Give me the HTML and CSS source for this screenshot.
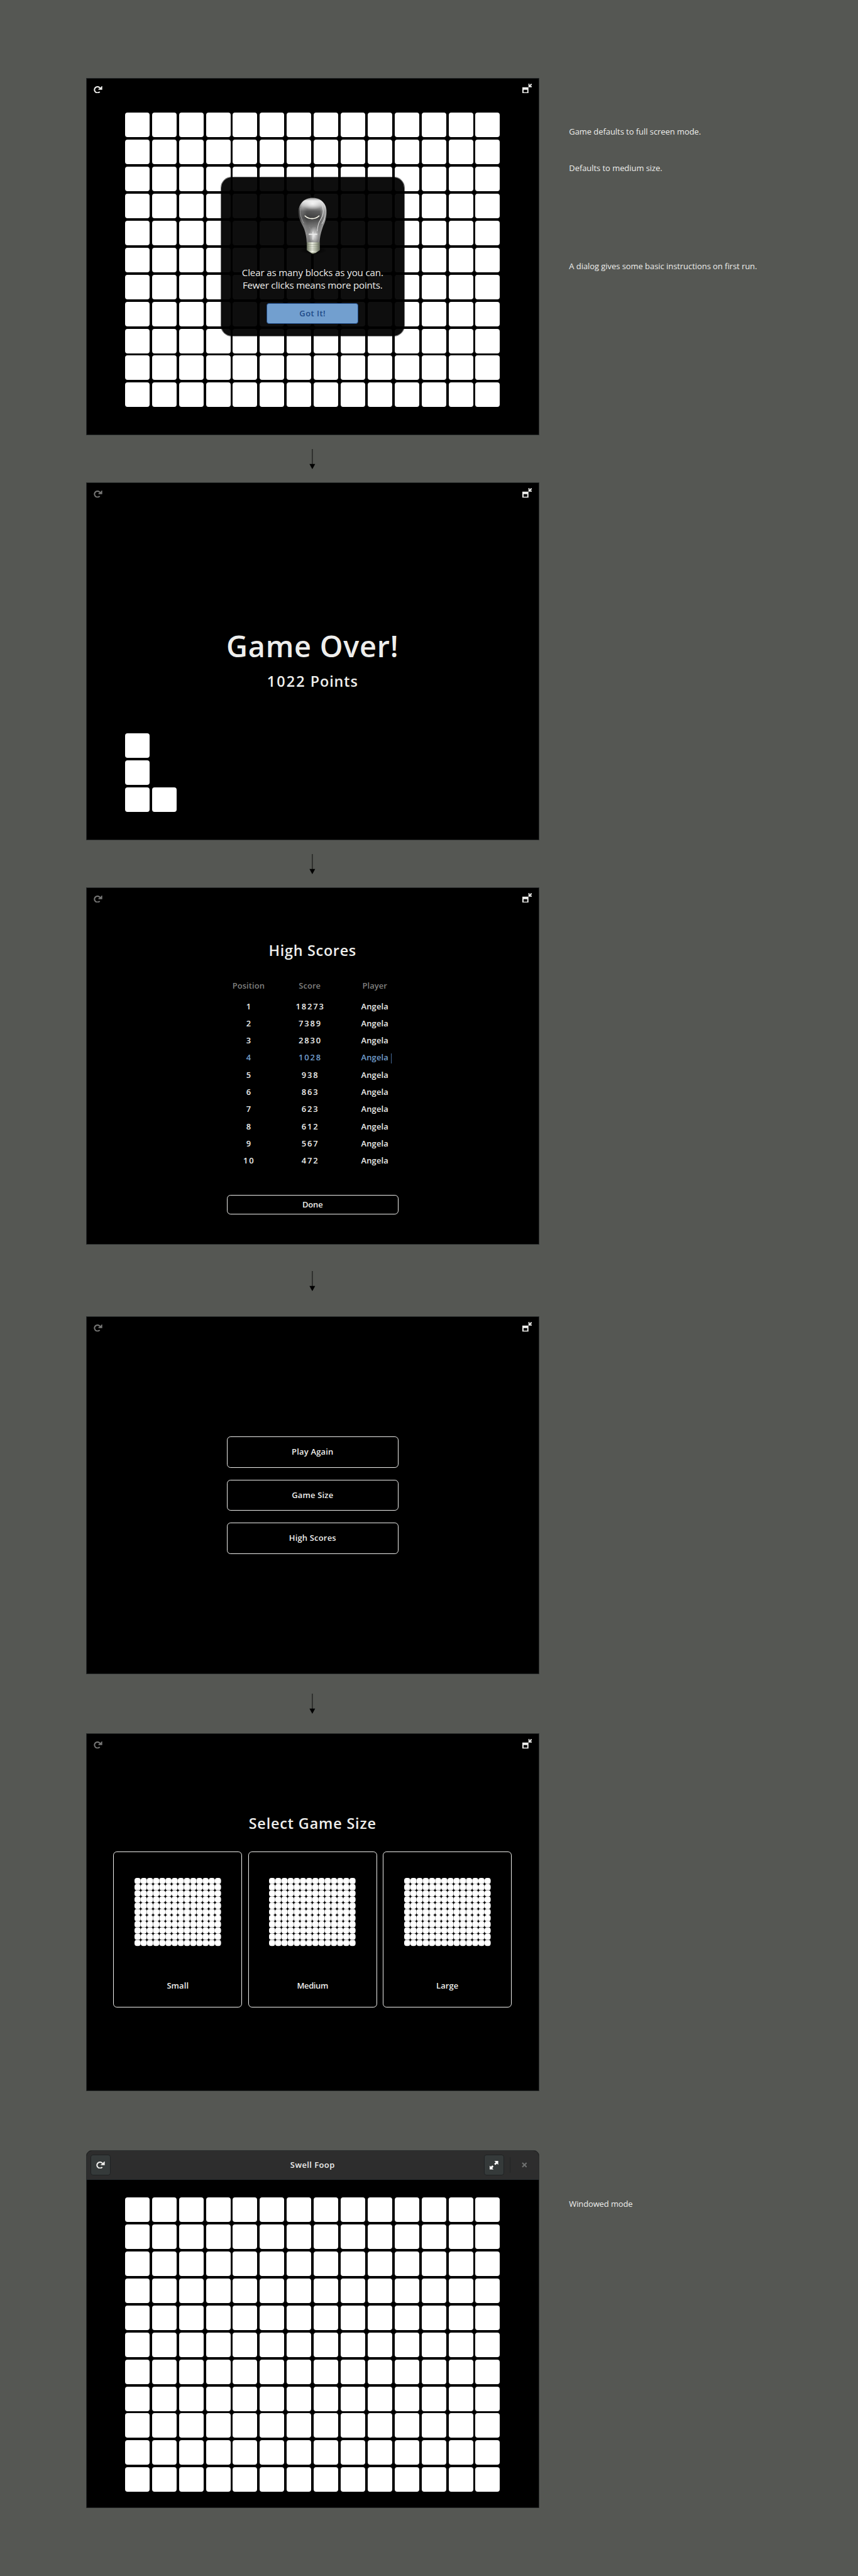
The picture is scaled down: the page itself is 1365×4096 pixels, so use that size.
FILE: index.html
```
<!DOCTYPE html>
<html lang="en">
<head>
<meta charset="utf-8">
<title>Swell Foop</title>
<link rel="stylesheet" href="styles.css">
</head>
<body>
<svg class="defs" width="0" height="0">
  <symbol id="reset" viewBox="0 0 16 16">
    <path d="M9.9 13.2A4.9 4.9 0 1 1 10.500 7.600" fill="none" stroke="currentColor" stroke-width="2.1"/>
    <path d="M14 4v6H7.800V8.400L9.500 8.200 12.800 4.400 13.200 4z" fill="currentColor"/>
  </symbol>
  <symbol id="restore" viewBox="0 0 16 16">
    <path d="M0 6h10v10H0zM2 10v4h6v-4z" fill="currentColor" fill-rule="evenodd"/>
    <path d="M10 0h1.6v2.6L14.4 0 16 1.4 13.2 4.2H15.5V6H10z" fill="currentColor"/>
  </symbol>
  <symbol id="expand" viewBox="0 0 16 16">
    <path d="M8.6 1H15v6.4l-2-2-2.6 2.4-2-2L11 3.2zM1 15V8.600l2 2 2.400-2.400 2 2L5.200 12.800 7.400 15z" fill="currentColor"/>
  </symbol>
  <symbol id="arrow" viewBox="0 0 10 33">
    <path d="M5 0v25" stroke="#2b2c2a" stroke-width="1.8"/>
    <path d="M.3 24.300h9.400L5 32.700z" fill="#000"/>
  </symbol>
</svg>

<main class="page">
  <section class="step">
    <div class="screen">
      <div class="tools"><svg class="icon"><use href="#reset"/></svg><svg class="icon"><use href="#restore"/></svg></div>
      <div class="board" data-cells="154"></div>
      <div class="dialog">
        <svg class="bulb" viewBox="0 0 48 92">
          <defs>
            <linearGradient id="glass" x1="0" y1="0" x2="0" y2="1">
              <stop offset="0" stop-color="#777"/><stop offset=".07" stop-color="#e0e0e0"/><stop offset=".17" stop-color="#b4b4b4"/>
              <stop offset=".3" stop-color="#555"/><stop offset=".45" stop-color="#3c3c3c"/><stop offset=".62" stop-color="#707070"/>
              <stop offset=".8" stop-color="#8d8d8d"/><stop offset="1" stop-color="#777"/>
            </linearGradient>
            <linearGradient id="edge" x1="0" y1="0" x2="1" y2="0">
              <stop offset="0" stop-color="#000" stop-opacity=".45"/><stop offset=".16" stop-color="#fff" stop-opacity=".12"/>
              <stop offset=".3" stop-color="#fff" stop-opacity="0"/><stop offset=".75" stop-color="#fff" stop-opacity=".05"/>
              <stop offset=".93" stop-color="#fff" stop-opacity=".45"/><stop offset="1" stop-color="#000" stop-opacity=".3"/>
            </linearGradient>
            <linearGradient id="brass" x1="0" y1="0" x2="1" y2="0">
              <stop offset="0" stop-color="#5e6656"/><stop offset=".15" stop-color="#a5ab96"/><stop offset=".42" stop-color="#f0f2e6"/>
              <stop offset=".7" stop-color="#b3b8a5"/><stop offset="1" stop-color="#5c6154"/>
            </linearGradient>
            <radialGradient id="glow"><stop offset="0" stop-color="#fff" stop-opacity=".8"/><stop offset="1" stop-color="#fff" stop-opacity="0"/></radialGradient>
            <radialGradient id="shade"><stop offset="0" stop-color="#000"/><stop offset="1" stop-color="#000" stop-opacity="0"/></radialGradient>
          </defs>
          <ellipse cx="25" cy="86" rx="23" ry="7" fill="url(#shade)"/>
          <path d="M24 .5C10.500.500.800 10.500.800 24.500c0 11 6 18 9.500 27 2.500 7 3.700 14 4 22.500h21c.300-8 1.700-15 3.700-21C41.500 43.500 47.200 36 47.200 24.500 47.200 10.500 37.500.500 24 .5z" fill="url(#glass)"/>
          <path d="M24 .5C10.500.500.800 10.500.800 24.500c0 11 6 18 9.500 27 2.500 7 3.700 14 4 22.500h21c.300-8 1.700-15 3.700-21C41.500 43.500 47.200 36 47.200 24.500 47.200 10.500 37.500.500 24 .5z" fill="url(#edge)"/>
          <ellipse cx="24" cy="10" rx="18" ry="10" fill="url(#glow)"/>
          <ellipse cx="26" cy="62" rx="8" ry="15" fill="url(#glow)"/>
          <path d="M4.500 17c-1.500 9 0 16 5 25" fill="none" stroke="#aaa" stroke-width=".8"/>
          <path d="M38 9c4.500 9 4 19-1 27-4 6-5 12-5.500 19" fill="none" stroke="#d8d8d8" stroke-width="1.100"/>
          <path d="M44 14c3 10 1 20-5 29" fill="none" stroke="#ddd" stroke-width="1"/>
          <path d="M11.500 30c6 6 17 6 23 0" fill="none" stroke="#fffef0" stroke-width="1.600" stroke-linecap="round"/>
          <path d="M19 48l4 12M29 48l-3 12" stroke="#999" stroke-width=".5"/>
          <path d="M17.500 60h14" stroke="#eee" stroke-width="1.800"/>
          <path d="M24.500 56v13" stroke="#eee" stroke-width="1"/>
          <path d="M14.300 73h21.500v13l-7 4.500h-7L14.300 86z" fill="url(#brass)"/>
          <path d="M14.500 76.500h21M14.500 79.500h21M14.500 82.500h21M15 85.500h20" stroke="#6b7162" stroke-opacity=".6" stroke-width=".8"/>
          <path d="M20 90h9l-4.500 2z" fill="#8c957a"/>
        </svg>
        <p class="hint"><span class="hint-a">Clear as many blocks as you can.</span><br><span class="hint-b">Fewer clicks means more points.</span></p>
        <div class="got">Got It!</div>
      </div>
    </div>
    <div class="notes">
      <p>Game defaults to full screen mode.</p>
      <p class="note-size">Defaults to medium size.</p>
      <p class="note-dialog">A dialog gives some basic instructions on first run.</p>
    </div>
  </section>

  <div class="next"><svg class="arrow"><use href="#arrow"/></svg></div>

  <section class="step">
    <div class="screen">
      <div class="tools"><svg class="icon dim"><use href="#reset"/></svg><svg class="icon"><use href="#restore"/></svg></div>
      <h1 class="over">Game Over!</h1>
      <p class="points"><span class="num">1022</span> Points</p>
      <div class="left-over"><i class="cell"></i><i class="cell row2"></i><i class="cell row3"></i><i class="cell row3 col2"></i></div>
    </div>
  </section>

  <div class="next"><svg class="arrow"><use href="#arrow"/></svg></div>

  <section class="step">
    <div class="screen">
      <div class="tools"><svg class="icon dim"><use href="#reset"/></svg><svg class="icon"><use href="#restore"/></svg></div>
      <h2 class="title scores-title">High Scores</h2>
      <div class="scores">
        <div class="row head"><span>Position</span><span>Score</span><span>Player</span></div>
        <div class="row"><b>1</b><b>18273</b><span>Angela</span></div>
        <div class="row"><b>2</b><b>7389</b><span>Angela</span></div>
        <div class="row"><b>3</b><b>2830</b><span>Angela</span></div>
        <div class="row mine"><b>4</b><b>1028</b><span class="entry">Angela</span></div>
        <div class="row"><b>5</b><b>938</b><span>Angela</span></div>
        <div class="row"><b>6</b><b>863</b><span>Angela</span></div>
        <div class="row"><b>7</b><b>623</b><span>Angela</span></div>
        <div class="row"><b>8</b><b>612</b><span>Angela</span></div>
        <div class="row"><b>9</b><b>567</b><span>Angela</span></div>
        <div class="row"><b>10</b><b>472</b><span>Angela</span></div>
      </div>
      <div class="button done">Done</div>
    </div>
  </section>

  <div class="next tall"><svg class="arrow"><use href="#arrow"/></svg></div>

  <section class="step">
    <div class="screen">
      <div class="tools"><svg class="icon dim"><use href="#reset"/></svg><svg class="icon"><use href="#restore"/></svg></div>
      <div class="menu">
        <div class="button">Play Again</div>
        <div class="button">Game Size</div>
        <div class="button">High Scores</div>
      </div>
    </div>
  </section>

  <div class="next mid"><svg class="arrow"><use href="#arrow"/></svg></div>

  <section class="step">
    <div class="screen">
      <div class="tools"><svg class="icon dim"><use href="#reset"/></svg><svg class="icon"><use href="#restore"/></svg></div>
      <h2 class="title size-title">Select Game Size</h2>
      <div class="sizes">
        <div class="size"><svg class="mini"></svg><span>Small</span></div>
        <div class="size"><svg class="mini"></svg><span class="medium">Medium</span></div>
        <div class="size"><svg class="mini"></svg><span>Large</span></div>
      </div>
    </div>
  </section>

  <div class="next mid"></div>

  <section class="step">
    <div class="screen window">
      <div class="header">
        <div class="tool"><svg class="icon"><use href="#reset"/></svg></div>
        <div class="name">Swell Foop</div>
        <div class="controls">
          <div class="tool"><svg class="icon expand"><use href="#expand"/></svg></div>
          <i class="divider"></i>
          <svg class="close" viewBox="0 0 9 9"><path d="M1 1l7 7M8 1L1 8" stroke="#6f7170" stroke-width="2.200"/></svg>
        </div>
      </div>
      <div class="board" data-cells="154"></div>
    </div>
    <div class="notes"><p class="note-window">Windowed mode</p></div>
  </section>
</main>
<script src="board.js"></script>
</body>
</html>
```
FILE: styles.css
```
* { box-sizing: border-box; margin: 0; }
html { background: #555753; overflow: hidden; }
body {
  zoom: 0.975;
  width: 1400px;
  background: #555753;
  color: #eeeeec;
  font: 13.3px/20px "Open Sans", "Noto Sans", sans-serif;
}
.defs { position: absolute; }
.page { height: 4200px; padding: 127px 0 0 140px; display: flex; flex-direction: column; }
.step { display: flex; flex: none; }
.next { flex: none; width: 740px; height: 77px; padding-top: 22.5px; }
.next.tall { height: 117px; padding-top: 42.5px; }
.next.mid { height: 97px; padding-top: 32.5px; }
.arrow { display: block; width: 10px; height: 33px; margin: 0 auto; }

.screen {
  position: relative;
  flex: none;
  width: 740px;
  height: 583px;
  background: #000;
  border: 1px solid #2a2d2d;
  display: flex;
  flex-direction: column;
  align-items: center;
}
.tools { align-self: stretch; flex: none; height: 56px; padding: 8px 11px 0 12px; display: flex; justify-content: space-between; }
.icon { display: block; width: 16px; height: 16px; color: #eeeeec; }
.icon.dim { color: #777776; }

.board { flex: none; width: 612px; display: grid; grid-template-columns: repeat(14, 40px); grid-auto-rows: 40px; gap: 4px; }
.cell { display: block; width: 40px; height: 40px; border-radius: 4px; background: #fff; }

.notes { margin-left: 48.5px; padding-top: 78px; letter-spacing: -0.04px; white-space: nowrap; }
.note-size { margin-top: 40px; }
.note-dialog { margin-top: 140px; }
.note-window { letter-spacing: -0.1px; }

.dialog {
  position: absolute;
  left: 218.5px;
  top: 160px;
  width: 301px;
  height: 260.5px;
  padding-top: 33px;
  border: 1px solid rgba(0, 0, 0, 0.55);
  border-radius: 18px;
  background: rgba(0, 0, 0, 0.945);
  background-clip: padding-box;
  display: flex;
  flex-direction: column;
  align-items: center;
}
.bulb { flex: none; width: 48px; height: 92px; }
.hint { margin-top: 21px; font-size: 15.5px; line-height: 20px; text-align: center; white-space: nowrap; }
.hint-a { letter-spacing: -0.15px; }
.hint-b { letter-spacing: -0.2px; }
.got {
  width: 150px;
  height: 34px;
  margin-top: 19px;
  border: 1px solid #204a87;
  border-radius: 4px;
  background: #729fcf;
  color: #204a87;
  font-weight: 600;
  line-height: 32px;
  letter-spacing: 0.5px;
  text-align: center;
}

.over { margin-top: 179.7px; font-size: 48px; line-height: 60px; font-weight: 600; letter-spacing: 0.77px; }
.points { margin-top: 11.3px; font-size: 24px; line-height: 32px; font-weight: 600; letter-spacing: 0.9px; }
.num { letter-spacing: 2.2px; }
.left-over { align-self: flex-start; margin: 69px 0 0 63px; display: grid; grid-template-columns: 40px 40px; grid-auto-rows: 40px; gap: 4px; }
.row2 { grid-row: 2; }
.row3 { grid-row: 3; }
.col2 { grid-column: 2; }

.title { font-size: 24px; line-height: 32px; font-weight: 600; }
.scores-title { margin-top: 30.7px; letter-spacing: 0.71px; }
.scores { align-self: flex-start; margin: 26.8px 0 0 214.6px; font-weight: 600; }
.row { height: 28px; line-height: 28px; display: grid; grid-template-columns: 99.8px 99.8px 112.6px; text-align: center; letter-spacing: 0.18px; }
.row b { font-weight: 600; letter-spacing: 1.9px; text-indent: 1.9px; }
.head { height: 33.8px; color: #7f7f7e; letter-spacing: 0.1px; }
.mine { color: #729fcf; }
.entry { position: relative; }
.entry::after { content: ""; position: absolute; left: 82.5px; top: 6.5px; width: 1.5px; height: 17px; background: #456795; }

.button {
  width: 280px;
  height: 51px;
  border: 1px solid #eeeeec;
  border-radius: 6px;
  font-weight: 600;
  line-height: 49px;
  letter-spacing: 0.2px;
  text-align: center;
}
.done { height: 32px; line-height: 30px; margin-top: 41.7px; letter-spacing: -0.1px; }
.menu { margin-top: 139px; display: flex; flex-direction: column; gap: 19px; }

.size-title { margin-top: 74.4px; letter-spacing: 0.86px; }
.sizes { margin-top: 29.6px; display: flex; gap: 10px; font-weight: 600; letter-spacing: 0.1px; }
.size { width: 210px; height: 254px; padding-top: 42px; border: 1px solid #eeeeec; border-radius: 6px; display: flex; flex-direction: column; align-items: center; }
.mini { width: 141.4px; height: 111px; margin-bottom: 54.8px; }
.medium { letter-spacing: -0.4px; }

.window { border-radius: 9px 9px 0 0; }
.header {
  align-self: stretch;
  flex: none;
  height: 47px;
  margin-bottom: 29px;
  padding: 0 19px 0 6.5px;
  border-radius: 8px 8px 0 0;
  border-bottom: 1px solid #2a3033;
  background: #2d2d2d;
  display: grid;
  grid-template-columns: 1fr auto 1fr;
  align-items: center;
}
.tool { width: 33.5px; height: 33.5px; border: 1px solid #1f2223; border-radius: 4px; background: #353a3a; display: flex; align-items: center; justify-content: center; }
.header > .tool .icon { margin: -4px 0 0 1px; }
.name { font-weight: 600; letter-spacing: 0.44px; margin-left: 12.5px; }
.controls { justify-self: end; display: flex; align-items: center; }
.expand { color: #fff; }
.divider { width: 1px; height: 25px; margin: 0 18px 0 9px; background: #222424; }
.close { display: block; width: 9px; height: 9px; }
```
FILE: board.js
```
// Fill each full board with its blocks.
document.querySelectorAll('.board').forEach(function (board) {
  for (var i = 0; i < Number(board.dataset.cells); i++) {
    var cell = document.createElement('i');
    cell.className = 'cell';
    board.appendChild(cell);
  }
});

// Draw the 14 by 11 preview of a board on each size card.
document.querySelectorAll('.mini').forEach(function (mini) {
  for (var row = 0; row < 11; row++) {
    for (var col = 0; col < 14; col++) {
      var block = document.createElementNS('http://www.w3.org/2000/svg', 'rect');
      block.setAttribute('x', (col * 10.09).toFixed(2));
      block.setAttribute('y', (row * 10.09).toFixed(2));
      block.setAttribute('width', '10');
      block.setAttribute('height', '10');
      block.setAttribute('rx', '4');
      block.setAttribute('fill', '#fff');
      mini.appendChild(block);
    }
  }
});
```
